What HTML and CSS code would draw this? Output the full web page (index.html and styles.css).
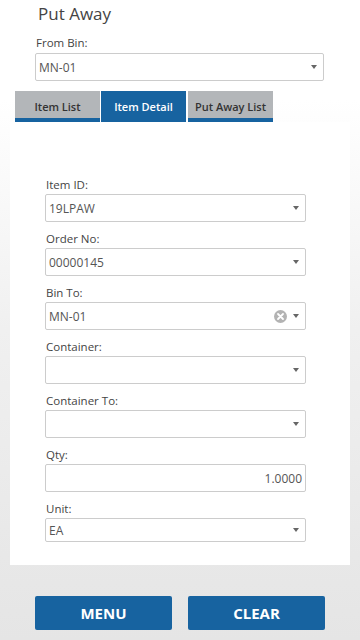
FILE: index.html
```html
<html>
<head>
    <title>Put Away</title>
    <link rel="stylesheet" href="styles.css">
</head>
<body>
    <div class="page">
        <h1 class="title">Put Away</h1>
        <div class="from-bin">
            <label>From Bin:</label>
            <div class="select">
                <span class="value">MN-01</span>
                <span class="arrow"></span>
            </div>
        </div>
        <div class="tabs">
            <div class="tab">Item List</div>
            <div class="tab active">Item Detail</div>
            <div class="tab">Put Away List</div>
        </div>
        <div class="panel">
            <div class="field">
                <label>Item ID:</label>
                <div class="select"><span class="value">19LPAW</span><span class="arrow"></span></div>
            </div>
            <div class="field">
                <label>Order No:</label>
                <div class="select"><span class="value">00000145</span><span class="arrow"></span></div>
            </div>
            <div class="field">
                <label>Bin To:</label>
                <div class="select">
                    <span class="value">MN-01</span>
                    <svg class="clear-icon" width="13" height="13" viewBox="0 0 13 13">
                        <circle cx="6.5" cy="6.5" r="6.5" fill="#b3b3b3"/>
                        <path d="M4 4 L9 9 M9 4 L4 9" stroke="#fff" stroke-width="1.8" stroke-linecap="round"/>
                    </svg>
                    <span class="arrow"></span>
                </div>
            </div>
            <div class="field">
                <label>Container:</label>
                <div class="select"><span class="value"></span><span class="arrow"></span></div>
            </div>
            <div class="field">
                <label>Container To:</label>
                <div class="select"><span class="value"></span><span class="arrow"></span></div>
            </div>
            <div class="field">
                <label>Qty:</label>
                <div class="select number"><span class="value">1.0000</span></div>
            </div>
            <div class="field">
                <label>Unit:</label>
                <div class="select short"><span class="value">EA</span><span class="arrow"></span></div>
            </div>
        </div>
        <div class="buttons">
            <button class="btn">MENU</button>
            <button class="btn">CLEAR</button>
        </div>
    </div>
</body>
</html>
```

FILE: styles.css
```css
body {
    margin: 0;
    font-family: "Open Sans", "Noto Sans", sans-serif;
    color: #444444;
    background: linear-gradient(to bottom, #ffffff 0px, #ffffff 100px, #f0f0f0 330px, #e5e5e5 640px);
    min-height: 640px;
}
.page {
    padding-top: 2px;
}
.title {
    font-size: 17px;
    font-weight: normal;
    margin: 0 0 0 38px;
    line-height: 24px;
    color: #444444;
}
label {
    display: block;
    font-size: 11.5px;
    line-height: 18px;
    color: #444444;
}
.from-bin {
    margin: 8px 36px 0 35px;
}
.from-bin label {
    margin-left: 1px;
    margin-bottom: 1px;
}
.select {
    display: flex;
    align-items: center;
    box-sizing: border-box;
    height: 28px;
    border: 1px solid #cccccc;
    border-radius: 2px;
    background: #ffffff;
    padding: 0 6px 0 3px;
}
.select.short {
    height: 24px;
}
.select.number {
    justify-content: flex-end;
    padding-right: 3px;
}
.value {
    flex: 1;
    font-size: 12px;
    color: #555555;
}
.number .value {
    flex: none;
}
.arrow {
    width: 0;
    height: 0;
    border-left: 3.5px solid transparent;
    border-right: 3.5px solid transparent;
    border-top: 4px solid #666666;
    margin-left: 6px;
}
.clear-icon {
    display: block;
}
.tabs {
    display: flex;
    gap: 1px;
    margin: 10px 0 0 15px;
}
.tab {
    box-sizing: border-box;
    width: 85px;
    height: 31px;
    background: #b3b6b9;
    border-bottom: 4px solid #1763a0;
    font-size: 11px;
    font-weight: 600;
    color: #333333;
    display: flex;
    align-items: center;
    justify-content: center;
    padding-top: 3px;
}
.tab:nth-child(3) {
    margin-left: 1px;
}
.tab.active {
    background: #1763a0;
    color: #ffffff;
}
.panel {
    background: #ffffff;
    margin: 0 10px;
    padding: 54px 44px 23px 35px;
}
.field {
    margin-bottom: 8px;
}
.field:last-child {
    margin-bottom: 0;
}
.field label {
    margin-left: 1px;
}
.buttons {
    display: flex;
    gap: 16px;
    margin: 31px 0 0 35px;
}
.btn {
    width: 137px;
    height: 34px;
    border: 0;
    border-radius: 2px;
    background: #1763a0;
    color: #ffffff;
    font-family: "Open Sans", "Noto Sans", sans-serif;
    font-weight: bold;
    font-size: 15px;
    padding: 0;
}
```
